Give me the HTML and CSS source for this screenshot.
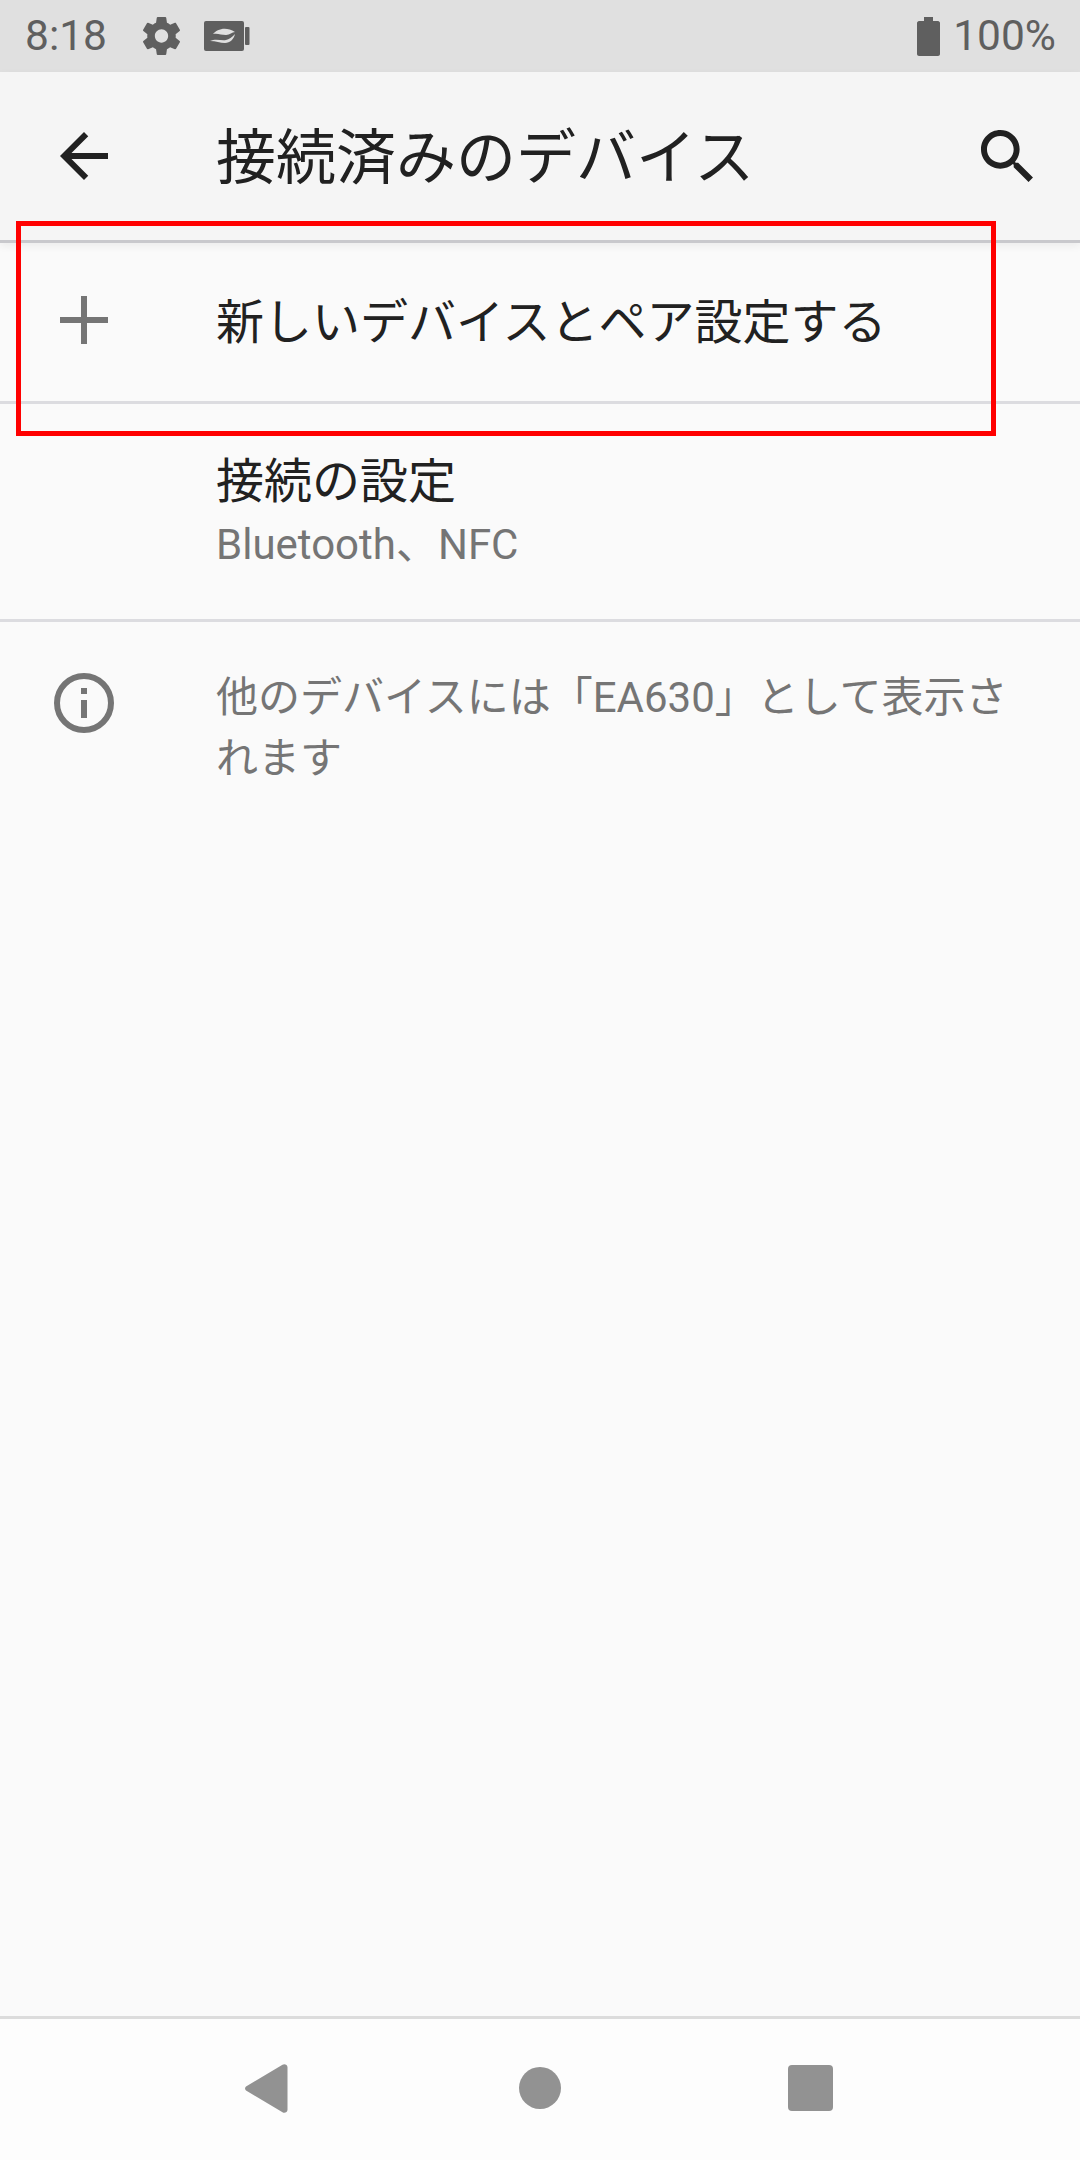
FILE: index.html
```html
<!DOCTYPE html>
<html lang="ja">
<head>
<meta charset="utf-8">
<title>接続済みのデバイス</title>
<link rel="stylesheet" href="styles.css">
</head>
<body>
<div class="screen">
  <div class="status">
    <span class="time">8:18</span>
    <svg class="st-gear" viewBox="2.300 2 19.400 20"><path fill="#5f5f5f" d="M19.430 12.980c.04-.32.07-.64.07-.98s-.03-.66-.07-.98l2.110-1.650c.19-.15.24-.42.12-.64l-2-3.460c-.12-.22-.39-.3-.61-.22l-2.490 1c-.52-.4-1.080-.73-1.690-.98l-.38-2.650C14.460 2.180 14.250 2 14 2h-4c-.25 0-.46.18-.49.42l-.38 2.650c-.61.25-1.170.59-1.690.98l-2.490-1c-.23-.09-.49 0-.61.22l-2 3.460c-.13.22-.07.49.12.64l2.110 1.650c-.04.32-.07.65-.07.98s.03.66.07.98l-2.110 1.650c-.19.15-.24.42-.12.64l2 3.460c.12.22.39.3.61.22l2.490-1c.52.4 1.080.73 1.690.98l.38 2.650c.03.24.24.42.49.42h4c.25 0 .46-.18.49-.42l.38-2.650c.61-.25 1.170-.59 1.690-.98l2.490 1c.23.09.49 0 .61-.22l2-3.460c.12-.22.07-.49-.12-.64l-2.110-1.650zM12 15.500c-1.930 0-3.500-1.570-3.500-3.500s1.570-3.500 3.500-3.500 3.500 1.570 3.500 3.500-1.570 3.500-3.500 3.500z"/></svg>
    <svg class="st-leaf" viewBox="0 0 46 30"><rect x="0" y="0" width="40" height="30" rx="2" fill="#5f5f5f"/><rect x="41" y="6" width="4.500" height="18" rx="1" fill="#5f5f5f"/><path fill="#e0e0e0" d="M9 13c4-5 13-8 22-2-3 0-5 3-9 3-5 0-8-2-13-1z"/><path fill="#e0e0e0" d="M6 20c6-3 11 0 16-1 3-.5 6-3 9-6-1 5-5 9-10 9-5 0-9-2-15-2z"/></svg>
    <span class="st-spacer"></span>
    <svg class="st-batt" viewBox="0 0 23 39"><path fill="#5f5f5f" d="M7 0h9v4h5c1 0 2 1 2 2v31c0 1-1 2-2 2H2c-1 0-2-1-2-2V6c0-1 1-2 2-2h5z"/></svg>
    <span class="pct">100%</span>
  </div>
  <header class="appbar">
    <svg class="icon-lead" viewBox="4 4 16 16"><path fill="#212121" d="M20 11H7.830l5.590-5.590L12 4l-8 8 8 8 1.410-1.410L7.830 13H20v-2z"/></svg>
    <h1 class="title">接続済みのデバイス</h1>
    <svg class="icon-search" viewBox="3 3 17.500 17.500"><path fill="#212121" d="M15.500 14h-.79l-.28-.27C15.410 12.590 16 11.110 16 9.500 16 5.910 13.090 3 9.500 3S3 5.910 3 9.500 5.910 16 9.500 16c1.610 0 3.090-.59 4.230-1.570l.27.28v.79l5 4.990L20.490 19l-4.990-5zm-6 0C7.010 14 5 11.990 5 9.500S7.010 5 9.500 5 14 7.010 14 9.500 11.990 14 9.500 14z"/></svg>
  </header>
  <main class="content">
    <div class="row row-add">
      <svg class="icon-lead" viewBox="0 0 48 48"><path fill="#757575" d="M21 0h6v21h21v6H27v21h-6V27H0v-6h21z"/></svg>
      <span class="row-title row-title-add">新しいデバイスとペア設定する</span>
    </div>
    <div class="row row-conn">
      <span class="icon-slot"></span>
      <div class="stack">
        <span class="row-title">接続の設定</span>
        <span class="row-sub">Bluetooth、NFC</span>
      </div>
    </div>
    <div class="row row-info">
      <svg class="icon-info" viewBox="0 0 60 60"><circle cx="30" cy="30" r="27" fill="none" stroke="#757575" stroke-width="6"/><rect x="27" y="15" width="6" height="6" fill="#757575"/><rect x="27" y="27" width="6" height="18" fill="#757575"/></svg>
      <p class="info-text">他のデバイスには「EA630」として表示されます</p>
    </div>
  </main>
  <nav class="navbar">
    <svg class="nav-back" viewBox="0 0 43 49"><path fill="#929292" d="M1 22.500 37.500 .8c2-1.300 5 0 5 2.500v42.400c0 2.500-3 3.800-5 2.500L1 26.500c-1.300-1-1.300-3 0-4z"/></svg>
    <span class="nav-home"></span>
    <span class="nav-recent"></span>
  </nav>
  <div class="highlight"></div>
</div>
</body>
</html>
```
FILE: styles.css
```css
* { box-sizing: border-box; }
html, body { margin: 0; padding: 0; }
body { font-family: Roboto, "Noto Sans CJK JP", sans-serif; }
.screen { position: relative; width: 1080px; height: 2160px; display: flex; flex-direction: column; background: #fafafa; overflow: hidden; }
.status { height: 72px; flex: none; background: #e0e0e0; display: flex; align-items: center; padding: 0 24px 0 25px; color: #5f5f5f; font-size: 42.500px; }
.time { width: 118px; line-height: 72px; }
.st-gear { width: 37px; height: 38px; margin-right: 24px; }
.st-leaf { width: 46px; height: 30px; }
.st-spacer { flex: 1; }
.st-batt { width: 23px; height: 39px; margin-right: 13px; }
.pct { line-height: 72px; }
.appbar { height: 171px; flex: none; background: #f5f5f5; border-bottom: 3px solid #c9c9cd; box-shadow: 0 3px 8px rgba(0,0,0,.06); display: flex; align-items: center; padding: 0 47px 0 60px; position: relative; z-index: 1; }
.icon-lead { width: 48px; height: 48px; flex: none; margin-right: 108px; }
.title { flex: 1; margin: 0 0 8px; font-size: 60px; font-weight: 400; color: #212121; }
.icon-search { width: 52px; height: 52px; }
.content { flex: 1; display: flex; flex-direction: column; }
.row { display: flex; padding-left: 60px; border-bottom: 3px solid #dcdce0; }
.row-add { height: 161px; align-items: center; padding-bottom: 4px; }
.row-conn { height: 218px; align-items: center; }
.icon-slot { width: 48px; flex: none; margin-right: 108px; }
.row-title { font-size: 48px; color: #212121; line-height: 62px; }
.row-title-add { margin-top: 6px; }
.stack { display: flex; flex-direction: column; }
.row-sub { font-size: 42px; color: #757575; line-height: 54px; margin-top: 5px; }
.row-info { border: 0; padding: 45px 60px 0 54px; align-items: flex-start; }
.icon-info { width: 60px; height: 60px; flex: none; margin: 6px 102px 0 0; }
.info-text { margin: 0; font-size: 42px; line-height: 61px; color: #757575; }
.navbar { height: 144px; flex: none; background: #fdfdfd; border-top: 3px solid #dcdcdc; display: flex; align-items: center; padding: 0 0 3px 245px; }
.nav-back { width: 43px; height: 49px; margin-right: 231px; }
.nav-home { width: 42px; height: 42px; border-radius: 50%; background: #929292; margin-right: 227px; }
.nav-recent { width: 45px; height: 46px; border-radius: 4px; background: #929292; }
.highlight { position: absolute; left: 16px; top: 221px; width: 980px; height: 215px; border: 5px solid #f00; z-index: 2; }
```
